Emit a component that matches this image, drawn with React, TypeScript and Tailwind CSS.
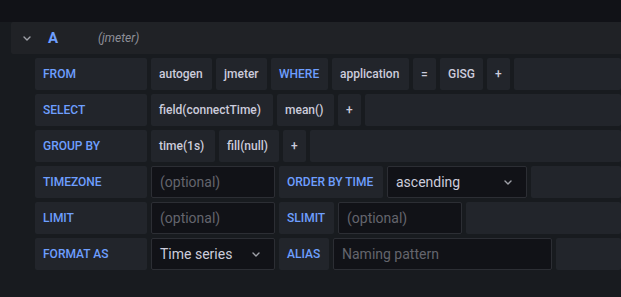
import React from "react";

const font = { fontFamily: "Roboto, 'Liberation Sans', sans-serif" };

function Label({ w, children }: { w: string; children: React.ReactNode }) {
  return (
    <div className={`${w} h-8 shrink-0 flex items-center px-2 rounded-[2px] bg-[#22252b] text-[12px] font-medium text-[#6e9fff] whitespace-nowrap`}>
      {children}
    </div>
  );
}

function Seg({ w, children }: { w: string; children: React.ReactNode }) {
  return (
    <div className={`${w} h-8 shrink-0 flex items-center px-2 rounded-[2px] bg-[#22252b] text-[12px] font-medium text-[#ccccdc] whitespace-nowrap`}>
      {children}
    </div>
  );
}

function Filler() {
  return <div className="flex-1 h-8 rounded-[2px] bg-[#22252b]" />;
}

function Input({ w, placeholder, value }: { w: string; placeholder?: string; value?: string }) {
  return (
    <div className={`${w} h-8 shrink-0 flex items-center px-2 rounded-[2px] bg-[#111217] border border-[#2c2e34] text-[14px] whitespace-nowrap`}>
      {value ? <span className="text-[#ccccdc]">{value}</span> : <span className="text-[#64656d]">{placeholder}</span>}
    </div>
  );
}

function Chevron({ className }: { className?: string }) {
  return (
    <svg width="8" height="5" viewBox="0 0 8 5" className={className} fill="none">
      <path d="M1 1l3 3 3-3" stroke="#9fa1a8" strokeWidth="1.4" strokeLinecap="round" strokeLinejoin="round" />
    </svg>
  );
}

function Select({ w, value }: { w: string; value: string }) {
  return (
    <div className={`${w} h-8 shrink-0 flex items-center justify-between pl-2 pr-[14px] rounded-[2px] bg-[#111217] border border-[#2c2e34] text-[14px] text-[#ccccdc] whitespace-nowrap`}>
      <span>{value}</span>
      <Chevron />
    </div>
  );
}

export default function App() {
  return (
    <div className="w-[621px] h-[297px] overflow-hidden bg-[#181b1f]" style={font}>
      <div className="h-[22px] bg-[#111217]" />
      <div className="pl-[11px]">
        <div className="h-8 bg-[#202226] rounded-l-[2px] flex items-center">
          <Chevron className="ml-[12px]" />
          <span className="ml-[17px] text-[15px] font-bold text-[#6e9fff]">A</span>
          <span className="ml-[40px] text-[12px] italic text-[#8e8f98]">(jmeter)</span>
        </div>
      </div>
      <div className="pl-[35px] mt-1 flex flex-col gap-1">
        <div className="flex gap-1">
          <Label w="w-[112px]">FROM</Label>
          <Seg w="w-[61px]">autogen</Seg>
          <Seg w="w-[51px]">jmeter</Seg>
          <Label w="w-[57px]">WHERE</Label>
          <Seg w="w-[77px]">application</Seg>
          <Seg w="w-[23px]">=</Seg>
          <Seg w="w-[43px]">GISG</Seg>
          <Seg w="w-[23px]">+</Seg>
          <Filler />
        </div>
        <div className="flex gap-1">
          <Label w="w-[112px]">SELECT</Label>
          <Seg w="w-[122px]">field(connectTime)</Seg>
          <Seg w="w-[57px]">mean()</Seg>
          <Seg w="w-[23px]">+</Seg>
          <Filler />
        </div>
        <div className="flex gap-1">
          <Label w="w-[112px]">GROUP BY</Label>
          <Seg w="w-[64px]">time(1s)</Seg>
          <Seg w="w-[60px]">fill(null)</Seg>
          <Seg w="w-[23px]">+</Seg>
          <Filler />
        </div>
        <div className="flex gap-1">
          <Label w="w-[112px]">TIMEZONE</Label>
          <Input w="w-[124px]" placeholder="(optional)" />
          <Label w="w-[104px]">ORDER BY TIME</Label>
          <Select w="w-[140px]" value="ascending" />
          <Filler />
        </div>
        <div className="flex gap-1">
          <Label w="w-[112px]">LIMIT</Label>
          <Input w="w-[124px]" placeholder="(optional)" />
          <Label w="w-[55px]">SLIMIT</Label>
          <Input w="w-[124px]" placeholder="(optional)" />
          <Filler />
        </div>
        <div className="flex gap-1">
          <Label w="w-[112px]">FORMAT AS</Label>
          <Select w="w-[124px]" value="Time series" />
          <Label w="w-[50px]">ALIAS</Label>
          <Input w="w-[219px]" placeholder="Naming pattern" />
          <Filler />
        </div>
      </div>
    </div>
  );
}
